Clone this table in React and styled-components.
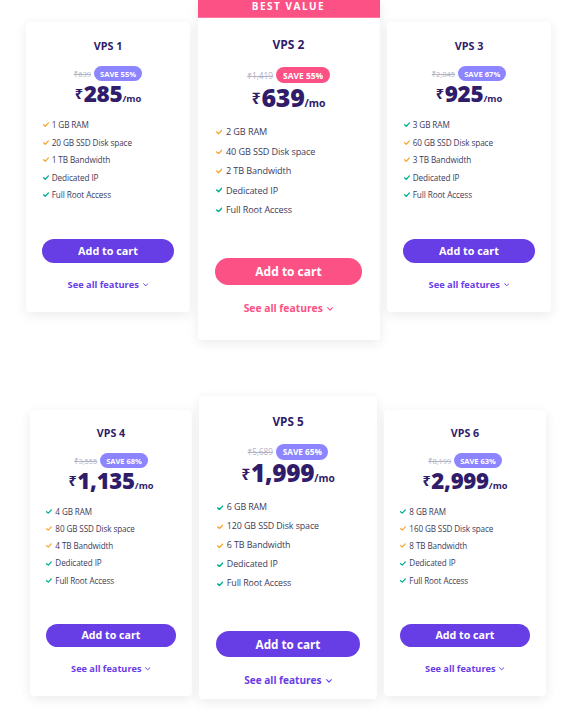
import React from 'react';
import styled, { createGlobalStyle, ThemeProvider } from 'styled-components';

const GlobalStyle = createGlobalStyle`
  html, body { margin: 0; padding: 0; background: #ffffff; }
  body {
    font-family: "Open Sans", "Noto Sans", "DejaVu Sans", sans-serif;
    -webkit-font-smoothing: antialiased;
  }
`;

const px = (n) => (p) => `${(n * p.theme.k).toFixed(2)}px`;

const PURPLE = '#673de6';
const LILAC = '#8c85ff';
const PINK = '#fc5185';
const NAVY = '#2f1c6a';
const ORANGE = '#f7a93b';
const GREEN = '#00b090';

const Page = styled.main`
  width: 572px;
  height: 713px;
  overflow: hidden;
  display: flex;
  flex-direction: column;
`;

const Row = styled.section`
  display: flex;
  align-items: flex-start;
  gap: ${(p) => p.$gap}px;
  padding-left: ${(p) => p.$left}px;
  margin-top: ${(p) => p.$top}px;
`;

const Featured = styled.div`
  flex: none;
  display: flex;
  flex-direction: column;
  box-shadow: 0 3px 12px rgba(29, 30, 60, 0.09);
  border-radius: 0 0 4px 4px;
`;

const Ribbon = styled.div`
  height: 18px;
  box-sizing: border-box;
  background: ${PINK};
  border-bottom: 1px solid #ff7aa3;
  color: #fff;
  font-size: 10px;
  line-height: 13px;
  font-weight: 700;
  letter-spacing: 1.5px;
  text-align: center;
`;

const Card = styled.article`
  flex: none;
  box-sizing: border-box;
  width: ${px(164)};
  height: ${(p) => (p.$h ? `${p.$h}px` : `${(290 * p.theme.k).toFixed(2)}px`)};
  margin-top: ${(p) => p.$offset || 0}px;
  padding: ${px(17)} ${px(16)} 0;
  background: #fff;
  border-radius: ${(p) => (p.$bare ? '0 0 4px 4px' : '4px')};
  box-shadow: ${(p) => (p.$bare ? 'none' : '0 3px 12px rgba(29, 30, 60, 0.09)')};
  display: flex;
  flex-direction: column;
  align-items: center;
`;

const Title = styled.h3`
  margin: 0;
  font-size: ${px(10.8)};
  line-height: ${px(14)};
  font-weight: 700;
  color: ${NAVY};
`;

const Deal = styled.div`
  display: flex;
  align-items: center;
  gap: ${px(3)};
  margin-top: ${px(13)};
  height: ${px(15)};
`;

const OldPrice = styled.s`
  font-size: ${px(7.5)};
  color: #b3b1c3;
`;

const Save = styled.span`
  height: ${px(15)};
  padding: 0 ${px(6)};
  border-radius: 999px;
  background: ${(p) => p.theme.badge};
  color: #fff;
  font-size: ${px(7.6)};
  font-weight: 700;
  display: flex;
  align-items: center;
`;

const Amount = styled.div`
  margin-top: ${px(1.5)};
  font-size: ${px(22.5)};
  line-height: 1;
  font-weight: 800;
  color: ${NAVY};
  white-space: nowrap;
  letter-spacing: -0.3px;
`;

const Currency = styled.span`
  font-size: ${px(14.5)};
  font-weight: 700;
  vertical-align: ${px(2.6)};
  margin-right: ${px(1)};
`;

const Per = styled.span`
  font-size: ${px(9.4)};
  font-weight: 700;
  letter-spacing: 0;
`;

const Features = styled.ul`
  list-style: none;
  margin: ${px(11)} 0 0;
  padding: 0;
  align-self: stretch;
`;

const Feature = styled.li`
  display: flex;
  align-items: center;
  gap: ${px(3.2)};
  height: ${px(17.5)};
  font-size: ${px(8.2)};
  line-height: ${px(17.5)};
  color: #3d3a58;
  white-space: nowrap;
  letter-spacing: -0.1px;
`;

const CheckIcon = styled.svg`
  flex: none;
  width: ${px(6)};
  height: ${px(5)};
  margin-left: ${px(0.5)};
`;

const CartButton = styled.button`
  margin-top: ${px(35)};
  align-self: stretch;
  height: ${px(24)};
  border: 0;
  border-radius: ${px(12)};
  padding: 0;
  background: ${(p) => p.theme.accent};
  color: #fff;
  font-family: inherit;
  font-weight: 700;
  font-size: ${px(10.8)};
  cursor: pointer;
`;

const SeeAll = styled.a`
  margin-top: ${px(15)};
  display: flex;
  align-items: center;
  gap: ${px(4)};
  font-size: ${px(9.3)};
  line-height: ${px(14)};
  font-weight: 700;
  color: ${(p) => p.theme.accent};
  text-decoration: none;
  cursor: pointer;
`;

const Chevron = styled.svg`
  width: ${px(5.5)};
  height: ${px(3.5)};
`;

const Check = ({ color }) => (
  <CheckIcon viewBox="0 0 10 8">
    <path d="M1 4.3 L3.8 6.8 L9 1.3" fill="none" stroke={color} strokeWidth="2.2" strokeLinecap="round" strokeLinejoin="round" />
  </CheckIcon>
);

const Plan = ({ plan, bare, offset, h }) => (
  <Card $bare={bare} $offset={offset} $h={h}>
    <Title>{plan.name}</Title>
    <Deal>
      <OldPrice>{plan.old}</OldPrice>
      <Save>{plan.save}</Save>
    </Deal>
    <Amount>
      <Currency>₹</Currency>
      {plan.price}
      <Per>/mo</Per>
    </Amount>
    <Features>
      {[plan.ram, plan.disk, plan.bw, 'Dedicated IP', 'Full Root Access'].map((f, i) => (
        <Feature key={f}>
          <Check color={plan.checks[i] === 'o' ? ORANGE : GREEN} />
          {f}
        </Feature>
      ))}
    </Features>
    <CartButton>Add to cart</CartButton>
    <SeeAll>
      See all features
      <Chevron viewBox="0 0 10 6">
        <path d="M1 1 L5 5 L9 1" fill="none" stroke="currentColor" strokeWidth="1.8" strokeLinecap="round" strokeLinejoin="round" />
      </Chevron>
    </SeeAll>
  </Card>
);

const plans = {
  v1: { name: 'VPS 1', old: '₹639', save: 'SAVE 55%', price: '285', ram: '1 GB RAM', disk: '20 GB SSD Disk space', bw: '1 TB Bandwidth', checks: 'ooogg' },
  v2: { name: 'VPS 2', old: '₹1,419', save: 'SAVE 55%', price: '639', ram: '2 GB RAM', disk: '40 GB SSD Disk space', bw: '2 TB Bandwidth', checks: 'ooogg' },
  v3: { name: 'VPS 3', old: '₹2,845', save: 'SAVE 67%', price: '925', ram: '3 GB RAM', disk: '60 GB SSD Disk space', bw: '3 TB Bandwidth', checks: 'googg' },
  v4: { name: 'VPS 4', old: '₹3,555', save: 'SAVE 68%', price: '1,135', ram: '4 GB RAM', disk: '80 GB SSD Disk space', bw: '4 TB Bandwidth', checks: 'googg' },
  v5: { name: 'VPS 5', old: '₹5,689', save: 'SAVE 65%', price: '1,999', ram: '6 GB RAM', disk: '120 GB SSD Disk space', bw: '6 TB Bandwidth', checks: 'googg' },
  v6: { name: 'VPS 6', old: '₹8,199', save: 'SAVE 63%', price: '2,999', ram: '8 GB RAM', disk: '160 GB SSD Disk space', bw: '8 TB Bandwidth', checks: 'googg' },
};

const purple = (k) => ({ k, accent: PURPLE, badge: LILAC });
const pink = (k) => ({ k, accent: PINK, badge: PINK });

export default function App() {
  return (
    <>
      <GlobalStyle />
      <Page>
        <Row $left={26} $gap={7.5} $top={0}>
          <ThemeProvider theme={purple(1)}>
            <Plan plan={plans.v1} offset={22} />
          </ThemeProvider>
          <ThemeProvider theme={pink(182 / 164)}>
            <Featured>
              <Ribbon>BEST VALUE</Ribbon>
              <Plan plan={plans.v2} bare />
            </Featured>
          </ThemeProvider>
          <ThemeProvider theme={purple(1)}>
            <Plan plan={plans.v3} offset={22} />
          </ThemeProvider>
        </Row>
        <Row $left={30} $gap={7} $top={56}>
          <ThemeProvider theme={purple(162 / 164)}>
            <Plan plan={plans.v4} offset={14} />
          </ThemeProvider>
          <ThemeProvider theme={purple(178 / 164)}>
            <Plan plan={plans.v5} h={303} />
          </ThemeProvider>
          <ThemeProvider theme={purple(162 / 164)}>
            <Plan plan={plans.v6} offset={14} />
          </ThemeProvider>
        </Row>
      </Page>
    </>
  );
}
